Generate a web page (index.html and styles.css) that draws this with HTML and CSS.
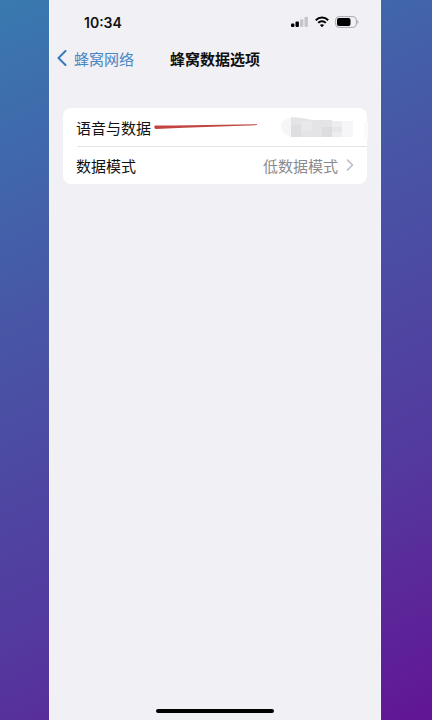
FILE: index.html
```html
<!DOCTYPE html>
<html lang="zh-CN">
<head>
  <meta charset="UTF-8">
  <meta name="viewport" content="width=device-width, initial-scale=1">
  <title>蜂窝数据选项</title>
  <link rel="stylesheet" href="styles.css">
</head>
<body>
<div class="phone">
  <div class="status-bar">
    <div class="time">10:34</div>
    <div class="status-icons">
      <svg class="signal" width="18" height="12" viewBox="0 0 18 12">
        <rect x="0" y="7.5" width="3.4" height="3.5" rx="1" fill="#000"/>
        <rect x="4.5" y="5.5" width="3.4" height="5.5" rx="1" fill="#000"/>
        <rect x="9" y="3.2" width="3.4" height="7.8" rx="1" fill="#c6c6ca"/>
        <rect x="13.5" y="0.8" width="3.4" height="10.2" rx="1" fill="#c6c6ca"/>
      </svg>
      <svg class="wifi" width="14" height="12" viewBox="0 0 14 12" fill="none" stroke="#000" stroke-width="2">
        <path d="M0.8 4.2C4.3 0.7 9.7 0.7 13.2 4.2"/>
        <path d="M3.2 6.9C5.4 4.8 8.6 4.8 10.8 6.9"/>
        <path d="M7 11.2L4.9 9.1C6.1 8 7.9 8 9.1 9.1Z" fill="#000" stroke="none"/>
      </svg>
      <svg class="battery" width="24" height="12" viewBox="0 0 24 12">
        <rect x="0.6" y="0.6" width="20.8" height="10.8" rx="3.4" fill="none" stroke="#acacb0"/>
        <rect x="2" y="2" width="13.5" height="8" rx="2" fill="#000"/>
        <path d="M22.4 4v4c1.4-0.6 1.4-3.4 0-4z" fill="#acacb0"/>
      </svg>
    </div>
  </div>

  <header class="nav-bar">
    <a class="back" href="#">
      <svg width="10" height="16" viewBox="0 0 10 16" fill="none" stroke="#3a78bd" stroke-width="2" stroke-linecap="round" stroke-linejoin="round">
        <path d="M8.5 1L1.5 8L8.5 15"/>
      </svg>
      <span>蜂窝网络</span>
    </a>
    <h1 class="title">蜂窝数据选项</h1>
  </header>

  <main class="card">
    <button class="row" type="button">
      <span class="label">语音与数据</span>
      <svg class="pointer" width="104" height="6" viewBox="0 0 104 6">
        <path d="M1 1.6L20 1.6L103 0.3V1.1L30 3.8L2 5C0 4.6 0 2.2 1 1.6Z" fill="#c24440"/>
      </svg>
      <!-- 打码的数值 -->
      <svg class="mosaic" width="88" height="24" viewBox="0 0 88 24">
        <path d="M12 1Q0 4 1 11Q2 18 11 21V1Z" fill="#f6f6f8"/>
        <path d="M11 1L22 2L32 4H52V21H11Z" fill="#e4e4e6"/>
        <rect x="11" y="9" width="10" height="12" fill="#dedee0"/>
        <rect x="21" y="5" width="11" height="10" fill="#e8e8ea"/>
        <rect x="42" y="11" width="10" height="10" fill="#dddddf"/>
        <rect x="52" y="5" width="10" height="16" fill="#ededef"/>
        <rect x="62" y="5" width="11" height="16" fill="#f6f6f8"/>
        <rect x="52" y="11" width="10" height="5" fill="#e6e6e8"/>
        <rect x="84" y="6" width="4" height="19" fill="#fafafc"/>
      </svg>
    </button>
    <button class="row" type="button">
      <span class="label">数据模式</span>
      <span class="value">低数据模式</span>
      <svg class="chevron" width="8" height="12" viewBox="0 0 8 12" fill="none" stroke="#bcbcc0" stroke-width="1.6" stroke-linecap="round" stroke-linejoin="round">
        <path d="M1.5 1L6.5 6L1.5 11"/>
      </svg>
    </button>
  </main>

  <div class="home-indicator"></div>
</div>
</body>
</html>
```

FILE: styles.css
```css
* {
  box-sizing: border-box;
}

body {
  margin: 0;
  padding: 0 51px 0 49px;
  min-height: 100vh;
  background: linear-gradient(155deg, #3979b0 0%, #4757a6 35%, #54389e 72%, #621594 100%);
  font-family: "Liberation Sans", "Noto Sans CJK SC", sans-serif;
  font-size: 15px;
  color: #111;
}

.phone {
  display: flex;
  flex-direction: column;
  min-height: 100vh;
  padding: 12px 13px 7px;
  background: #f0f0f5;
  border-left: 1px solid #f3f7fd;
  border-right: 1px solid #f3f7fd;
}

.status-bar {
  display: flex;
  justify-content: space-between;
  align-items: center;
  height: 20px;
  padding: 0 8px 0 21px;
}

.time {
  font-family: Inter, sans-serif;
  font-size: 14px;
  font-weight: 600;
}

.status-icons {
  display: flex;
  align-items: center;
  gap: 6px;
}

.nav-bar {
  display: grid;
  grid-template-columns: 1fr auto 1fr;
  align-items: center;
  height: 24px;
  margin: 14px 0 38px;
}

.back {
  display: flex;
  align-items: center;
  gap: 7px;
  margin-left: -6px;
  color: #4a86c4;
  text-decoration: none;
  white-space: nowrap;
}

.title {
  margin: 0;
  font-size: 15px;
  font-weight: 700;
}

.card {
  background: #fff;
  border-radius: 8px;
}

.row {
  display: flex;
  align-items: center;
  position: relative;
  width: 100%;
  height: 38px;
  padding: 0 13px;
  border: 0;
  background: none;
  font: inherit;
  color: inherit;
  text-align: left;
  cursor: pointer;
}

.row + .row::before {
  content: "";
  position: absolute;
  top: 0;
  left: 14px;
  right: 0;
  height: 1px;
  background: #e4e4e7;
}

.pointer {
  position: absolute;
  left: 91px;
  top: 16px;
}

.mosaic {
  position: absolute;
  right: -1px;
  top: 8px;
}

.value {
  margin-left: auto;
  color: #8a8a8e;
}

.chevron {
  margin-left: 8px;
}

.home-indicator {
  width: 118px;
  height: 4px;
  margin: auto auto 0;
  border-radius: 2px;
  background: #000;
}
```
